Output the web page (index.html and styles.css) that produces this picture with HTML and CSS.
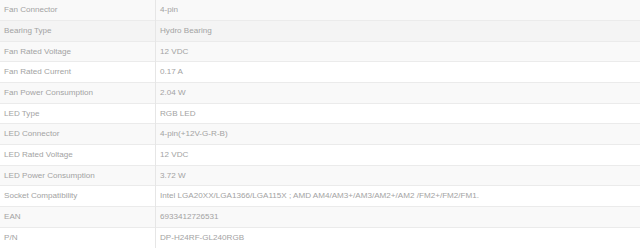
FILE: index.html
```html
<!DOCTYPE html>
<html>
<head>
<meta charset="utf-8">
<link rel="stylesheet" href="styles.css">
</head>
<body>
<table class="specs">
<tbody>
<tr class="odd"><td class="k">Fan Connector</td><td class="v">4-pin</td></tr>
<tr class="hover"><td class="k">Bearing Type</td><td class="v">Hydro Bearing</td></tr>
<tr class="odd"><td class="k">Fan Rated Voltage</td><td class="v">12 VDC</td></tr>
<tr><td class="k">Fan Rated Current</td><td class="v">0.17 A</td></tr>
<tr class="odd"><td class="k">Fan Power Consumption</td><td class="v">2.04 W</td></tr>
<tr><td class="k">LED Type</td><td class="v">RGB LED</td></tr>
<tr class="odd"><td class="k">LED Connector</td><td class="v">4-pin(+12V-G-R-B)</td></tr>
<tr><td class="k">LED Rated Voltage</td><td class="v">12 VDC</td></tr>
<tr class="odd"><td class="k">LED Power Consumption</td><td class="v">3.72 W</td></tr>
<tr><td class="k">Socket Compatibility</td><td class="v">Intel LGA20XX/LGA1366/LGA115X ; AMD AM4/AM3+/AM3/AM2+/AM2 /FM2+/FM2/FM1.</td></tr>
<tr class="odd"><td class="k">EAN</td><td class="v">6933412726531</td></tr>
<tr><td class="k">P/N</td><td class="v">DP-H24RF-GL240RGB</td></tr>
</tbody>
</table>
</body>
</html>
```
FILE: styles.css
```css
html, body {
  margin: 0;
  padding: 0;
  background: #ffffff;
}
.specs {
  width: 640px;
  border-collapse: collapse;
  font-family: "Liberation Sans", Arial, sans-serif;
  font-size: 8.1px;
  color: #a3a3a3;
}
.specs tr {
  height: 20.67px;
}
.specs td {
  padding: 0 4px;
  border-top: 1px solid #ebebeb;
  vertical-align: middle;
  line-height: 12px;
}
.specs tr:first-child td {
  border-top: none;
}
.specs .k {
  width: 147px;
  border-right: 1px solid #e6e6e6;
}
.specs .v {
  padding-left: 4px;
}
.specs .odd {
  background: #f9f9f9;
}
.specs .hover {
  background: #f4f4f4;
}
```
